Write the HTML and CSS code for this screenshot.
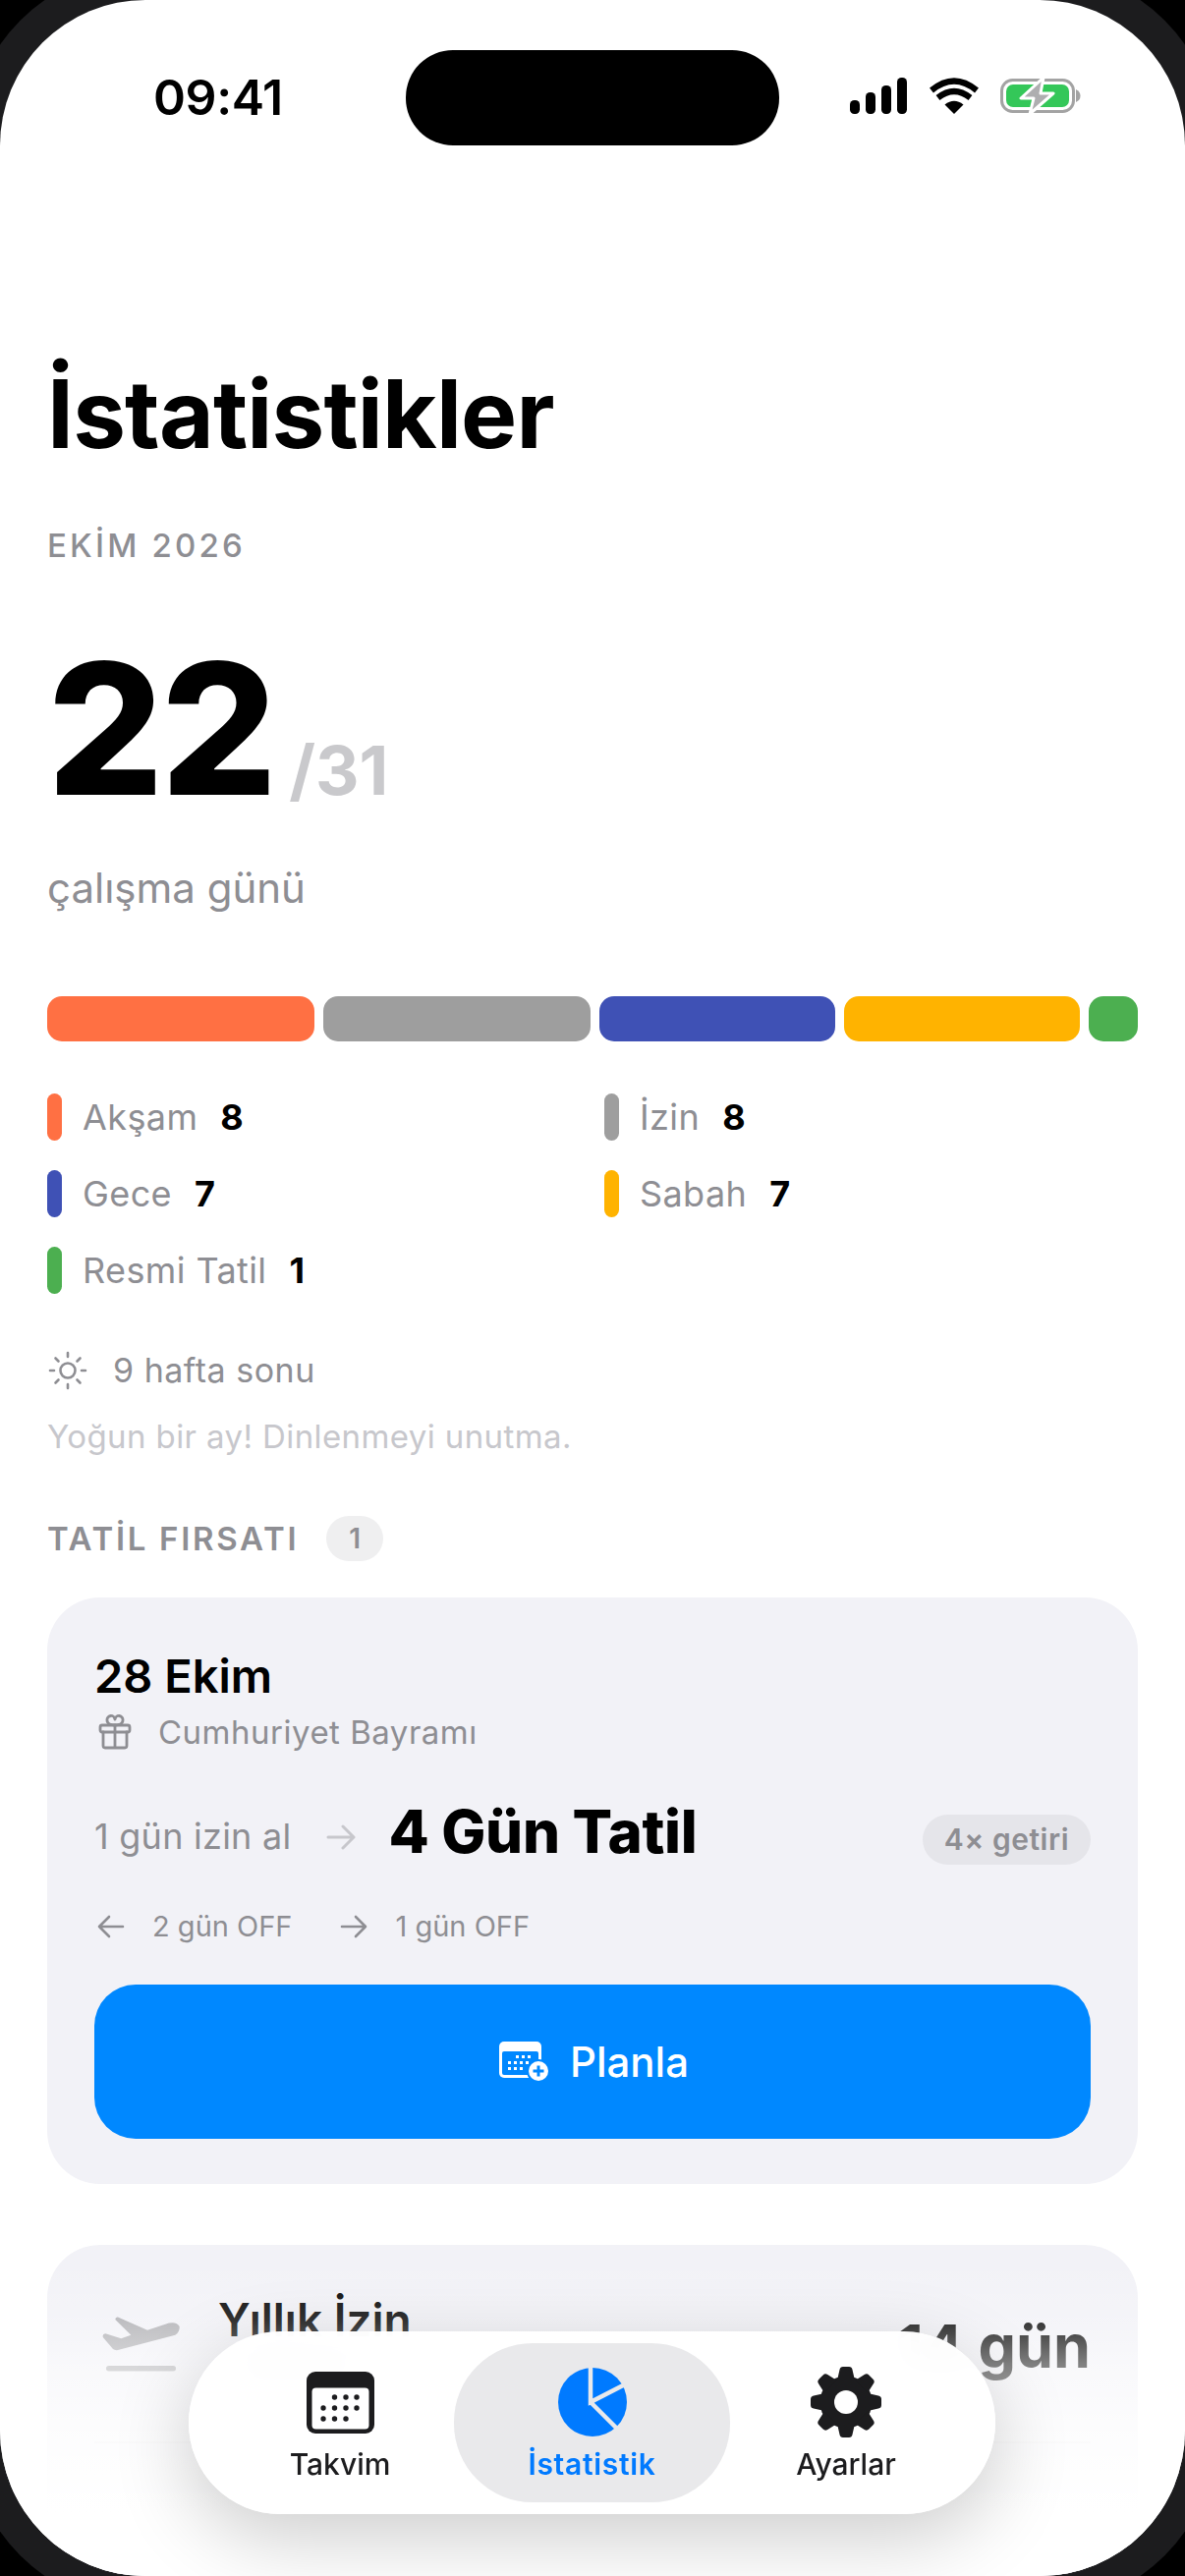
FILE: index.html
```html
<!DOCTYPE html>
<html lang="tr">
<head>
    <meta charset="UTF-8">
    <meta name="viewport" content="width=device-width, initial-scale=1.0">
    <title>İstatistikler</title>
    <link rel="stylesheet" href="styles.css">
</head>
<body>
    <div class="screen">
        <div class="status-bar">
            <div class="time">09:41</div>
            <div class="island"></div>
            <div class="status-icons">
                <svg class="signal" width="58" height="37" viewBox="0 0 58 37">
                    <rect x="0" y="23" width="10" height="14" rx="4.5"/>
                    <rect x="16" y="15" width="10" height="22" rx="4.5"/>
                    <rect x="32" y="8" width="10" height="29" rx="4.5"/>
                    <rect x="48" y="0" width="10" height="37" rx="4.5"/>
                </svg>
                <svg class="wifi" width="50" height="37" viewBox="0 0 50 37">
                    <path d="M25 37 L15.5 27.5 Q25 20 34.5 27.5 Z"/>
                    <path d="M8.5 20.5 Q25 7.5 41.5 20.5" fill="none" stroke="#000" stroke-width="6.2"/>
                    <path d="M2 13 Q25 -6 48 13" fill="none" stroke="#000" stroke-width="6.2"/>
                </svg>
                <svg class="battery" width="82" height="40" viewBox="0 0 82 40">
                    <rect x="1.5" y="3.5" width="73" height="32" rx="11" fill="#fff" stroke="#a3a3a3" stroke-width="3"/>
                    <rect x="6" y="8" width="64" height="23" rx="7" fill="#34c759"/>
                    <path d="M77 13 Q81.5 15 81.5 19.5 Q81.5 24 77 26 Z" fill="#a3a3a3"/>
                    <path d="M44 1 L21 22 H34 L30 38 L54 17 H41 Z" fill="#aeaeb0" stroke="#fff" stroke-width="3" stroke-linejoin="round"/>
                </svg>
            </div>
        </div>

        <div class="content">
            <h1 class="page-title">İstatistikler</h1>
            <div class="month">EKİM 2026</div>

            <div class="total">
                <span class="total-num">22</span>
                <span class="total-of">/31</span>
            </div>
            <div class="total-label">çalışma günü</div>

            <div class="bar">
                <div class="seg seg-8 orange"></div>
                <div class="seg seg-8 gray"></div>
                <div class="seg seg-7 blue"></div>
                <div class="seg seg-7 yellow"></div>
                <div class="seg seg-1 green"></div>
            </div>

            <div class="legend">
                <div class="legend-item"><span class="swatch orange"></span><span class="legend-name">Akşam</span><span class="legend-count">8</span></div>
                <div class="legend-item"><span class="swatch gray"></span><span class="legend-name">İzin</span><span class="legend-count">8</span></div>
                <div class="legend-item"><span class="swatch blue"></span><span class="legend-name">Gece</span><span class="legend-count">7</span></div>
                <div class="legend-item"><span class="swatch yellow"></span><span class="legend-name">Sabah</span><span class="legend-count">7</span></div>
                <div class="legend-item"><span class="swatch green"></span><span class="legend-name">Resmi Tatil</span><span class="legend-count">1</span></div>
            </div>

            <div class="weekend">
                <svg width="40" height="40" viewBox="0 0 40 40" fill="none" stroke="#8e8e93" stroke-width="2.6" stroke-linecap="round">
                    <circle cx="20" cy="20" r="7.5"/>
                    <path d="M20 2v4M20 34v4M2 20h4M34 20h4M7.5 7.5l3 3M29.5 29.5l3 3M7.5 32.5l3-3M29.5 10.5l3-3"/>
                </svg>
                <span>9 hafta sonu</span>
            </div>
            <div class="note">Yoğun bir ay! Dinlenmeyi unutma.</div>

            <div class="section-head">
                <span class="section-title">TATİL FIRSATI</span>
                <span class="section-badge">1</span>
            </div>

            <div class="card deal">
                <div class="deal-date">28 Ekim</div>
                <div class="deal-holiday">
                    <svg width="36" height="36" viewBox="0 0 36 36" fill="none" stroke="#8e8e93" stroke-width="2.8" stroke-linejoin="round" stroke-linecap="round">
                        <rect x="3" y="11" width="30" height="7" rx="2"/>
                        <path d="M6 18v14a2 2 0 0 0 2 2h20a2 2 0 0 0 2-2V18M18 11v23"/>
                        <path d="M18 11c-3 0-8-1-8-5a3.6 3.6 0 0 1 8-1 3.6 3.6 0 0 1 8 1c0 4-5 5-8 5Z"/>
                    </svg>
                    <span>Cumhuriyet Bayramı</span>
                </div>
                <div class="deal-main">
                    <span class="deal-take">1 gün izin al</span>
                    <svg class="deal-arrow" width="30" height="26" viewBox="0 0 30 26" fill="none" stroke="#c7c7cc" stroke-width="3" stroke-linecap="round" stroke-linejoin="round">
                        <path d="M2 13h26M17 2l11 11-11 11"/>
                    </svg>
                    <span class="deal-result">4 Gün Tatil</span>
                    <span class="deal-pill">4× getiri</span>
                </div>
                <div class="deal-off">
                    <svg width="28" height="24" viewBox="0 0 28 24" fill="none" stroke="#8e8e93" stroke-width="2.6" stroke-linecap="round" stroke-linejoin="round">
                        <path d="M26 12H2M12 2 2 12l10 10"/>
                    </svg>
                    <span class="off-left">2 gün OFF</span>
                    <svg width="28" height="24" viewBox="0 0 28 24" fill="none" stroke="#8e8e93" stroke-width="2.6" stroke-linecap="round" stroke-linejoin="round">
                        <path d="M2 12h24M16 2l10 10-10 10"/>
                    </svg>
                    <span>1 gün OFF</span>
                </div>
                <button class="plan-btn">
                    <svg width="52" height="42" viewBox="0 0 52 42">
                        <rect x="0" y="0" width="43" height="37" rx="5" fill="#fff"/>
                        <rect x="3" y="10" width="37" height="24" rx="2" fill="#0088ff"/>
                        <g fill="#fff">
                            <rect x="17" y="14" width="3" height="3"/><rect x="23" y="14" width="3" height="3"/><rect x="29" y="14" width="3" height="3"/>
                            <rect x="9" y="20" width="3" height="3"/><rect x="15" y="20" width="3" height="3"/><rect x="21" y="20" width="3" height="3"/><rect x="27" y="20" width="3" height="3"/>
                            <rect x="9" y="26" width="3" height="3"/><rect x="15" y="26" width="3" height="3"/><rect x="21" y="26" width="3" height="3"/>
                        </g>
                        <circle cx="40" cy="30" r="12" fill="#0088ff"/>
                        <circle cx="40" cy="30" r="10" fill="#fff"/>
                        <path d="M40 24.5v11M34.500 30h11" stroke="#0088ff" stroke-width="3"/>
                    </svg>
                    <span>Planla</span>
                </button>
            </div>

            <div class="card leave">
                <div class="leave-row">
                    <svg class="plane" width="80" height="56" viewBox="0 0 80 56">
                        <path d="M13.300 3 Q13.500 0 16 .5 L46 13.700 L68 6.500 Q76 5 78.700 10 Q79 16 74.300 18.700 L16 34 Q13 34.500 11 33 L1 21.300 Q-.5 18 3.300 17.300 L19.300 22.300 L29.300 18.700 Z" fill="#aeaeb2"/>
                        <rect x="4" y="50" width="71" height="5.500" rx="2.700" fill="#aeaeb2"/>
                    </svg>
                    <div class="leave-text">
                        <div class="leave-name">Yıllık İzin</div>
                        <div class="leave-sub"></div>
                    </div>
                    <div class="leave-days">14 gün</div>
                </div>
                <div class="leave-line"></div>
            </div>
        </div>

        <div class="fade"></div>

        <nav class="tabbar">
            <div class="tab">
                <div class="tab-icon">
                    <svg width="69" height="63" viewBox="0 0 69 63">
                        <rect width="69" height="63" rx="9" fill="#1c1c1e"/>
                        <rect x="5.500" y="16.500" width="58" height="42" rx="4" fill="#fff"/>
                        <g fill="#1c1c1e">
                            <circle cx="28.500" cy="26" r="2.700"/><circle cx="40" cy="26" r="2.700"/><circle cx="51" cy="26" r="2.700"/>
                            <circle cx="17" cy="37" r="2.700"/><circle cx="28.500" cy="37" r="2.700"/><circle cx="40" cy="37" r="2.700"/><circle cx="51" cy="37" r="2.700"/>
                            <circle cx="17" cy="48" r="2.700"/><circle cx="28.500" cy="48" r="2.700"/><circle cx="40" cy="48" r="2.700"/>
                        </g>
                    </svg>
                </div>
                <span>Takvim</span>
            </div>
            <div class="tab active">
                <div class="tab-icon">
                    <svg width="70" height="70" viewBox="0 0 70 70">
                        <circle cx="35" cy="35" r="35" fill="#007aff"/>
                        <path d="M33 0V35L68 17M33 35 61 63" fill="none" stroke="#e9e9eb" stroke-width="4.500"/>
                    </svg>
                </div>
                <span>İstatistik</span>
            </div>
            <div class="tab">
                <div class="tab-icon">
                    <svg width="72" height="72" viewBox="0 0 72 72">
                        <defs>
                            <path id="tooth" d="M27 14 L29.500 3 Q30 0 33 0 H39 Q42 0 42.500 3 L45 14 Z"/>
                        </defs>
                        <g fill="#1c1c1e">
                            <circle cx="36" cy="36" r="26.500"/>
                            <use href="#tooth"/>
                            <use href="#tooth" transform="rotate(45 36 36)"/>
                            <use href="#tooth" transform="rotate(90 36 36)"/>
                            <use href="#tooth" transform="rotate(135 36 36)"/>
                            <use href="#tooth" transform="rotate(180 36 36)"/>
                            <use href="#tooth" transform="rotate(225 36 36)"/>
                            <use href="#tooth" transform="rotate(270 36 36)"/>
                            <use href="#tooth" transform="rotate(315 36 36)"/>
                        </g>
                        <circle cx="36" cy="36" r="12" fill="#fff"/>
                    </svg>
                </div>
                <span>Ayarlar</span>
            </div>
        </nav>
    </div>
</body>
</html>
```

FILE: styles.css
```css
* {
    box-sizing: border-box;
}

html, body {
    margin: 0;
    background: #000;
}

body {
    width: 1206px;
    height: 2622px;
    overflow: hidden;
    font-family: 'Inter', 'Liberation Sans', sans-serif;
    color: #000;
}

/* the spread shadow is the dark bezel ring seen in the corners */
.screen {
    position: relative;
    width: 1206px;
    height: 2622px;
    overflow: hidden;
    background: #fff;
    border-radius: 148px;
    box-shadow: 0 0 0 32px #1c1c1e;
}

.status-bar {
    display: flex;
    height: 148px;
    padding: 51px 106px 0 156px;
}

.time {
    width: 257px;
    margin-top: 21px;
    font-size: 50px;
    line-height: 54px;
    font-weight: 600;
    letter-spacing: -0.4px;
    white-space: nowrap;
}

.island {
    width: 380px;
    height: 97px;
    background: #000;
    border-radius: 48px;
}

.status-icons {
    display: flex;
    gap: 23px;
    align-items: flex-start;
    margin: 28px 0 0 auto;
}

.status-icons .battery {
    margin-left: -1px;
    margin-top: -1px;
}

.content {
    padding: 0 48px;
}

.page-title {
    margin: 215px 0 0;
    font-size: 96px;
    line-height: 116px;
    font-weight: 700;
    letter-spacing: -0.8px;
}

.month {
    margin-top: 56px;
    font-size: 33px;
    line-height: 40px;
    font-weight: 500;
    letter-spacing: 3.2px;
    color: #8e8e93;
}

.total {
    display: flex;
    align-items: baseline;
    gap: 15px;
    margin-top: 62px;
}

.total-num {
    font-size: 186px;
    line-height: 210px;
    font-weight: 800;
    letter-spacing: -3px;
}

.total-of {
    font-size: 69px;
    font-weight: 700;
    color: #c9c9cc;
}

.total-label {
    margin-top: 32px;
    font-size: 42px;
    line-height: 50px;
    color: #8e8e93;
}

.bar {
    display: flex;
    gap: 9px;
    height: 46px;
    margin-top: 85px;
}

.seg {
    border-radius: 15px;
}

.seg-8 {
    flex: 8;
}

.seg-7 {
    flex: 7.06;
}

.seg-1 {
    flex: 1;
    min-width: 50px;
}

.orange {
    background: #ff7043;
}

.gray {
    background: #9e9e9e;
}

.blue {
    background: #3f51b5;
}

.yellow {
    background: #ffb300;
}

.green {
    background: #4caf50;
}

.legend {
    display: grid;
    grid-template-columns: 555px 555px;
    column-gap: 12px;
    row-gap: 30px;
    margin-top: 53px;
}

.legend-item {
    display: flex;
    align-items: center;
    height: 48px;
}

.swatch {
    width: 15px;
    height: 48px;
    margin-right: 21px;
    border-radius: 8px;
}

.legend-name {
    margin-right: 23px;
    font-size: 36px;
    color: #8e8e93;
    letter-spacing: 0.4px;
}

.legend-count {
    font-size: 36px;
    font-weight: 700;
}

.weekend {
    display: flex;
    align-items: center;
    gap: 26px;
    margin-top: 57px;
    padding-left: 1px;
    font-size: 34px;
    color: #8e8e93;
    letter-spacing: 0.5px;
}

.note {
    margin-top: 26px;
    font-size: 33px;
    line-height: 42px;
    color: #c7c7cc;
    letter-spacing: 0.4px;
}

.section-head {
    display: flex;
    align-items: center;
    gap: 28px;
    margin-top: 60px;
}

.section-title {
    font-size: 33px;
    font-weight: 600;
    letter-spacing: 2.7px;
    color: #8e8e93;
}

.section-badge {
    width: 58px;
    height: 46px;
    border-radius: 23px;
    background: #efeff0;
    color: #8e8e93;
    font-size: 28px;
    font-weight: 600;
    line-height: 46px;
    text-align: center;
}

.card {
    background: #f2f2f7;
    border-radius: 54px;
}

.deal {
    margin-top: 37px;
    height: 597px;
    padding: 51px 48px 0;
}

.deal-date {
    font-size: 47px;
    line-height: 58px;
    font-weight: 600;
}

.deal-holiday {
    display: flex;
    align-items: center;
    gap: 26px;
    margin-top: 8px;
    padding-left: 3px;
    font-size: 33px;
    line-height: 40px;
    color: #8e8e93;
    letter-spacing: 0.5px;
}

.deal-main {
    display: flex;
    align-items: center;
    margin-top: 44px;
    height: 74px;
}

.deal-take {
    margin-top: 10px;
    font-size: 36px;
    color: #8e8e93;
    letter-spacing: 0.25px;
}

.deal-arrow {
    margin: 12px 33px 0 36px;
}

.deal-result {
    font-size: 60px;
    font-weight: 800;
    letter-spacing: -0.3px;
}

.deal-pill {
    margin: 16px 0 0 auto;
    padding: 0 22px;
    height: 51px;
    border-radius: 26px;
    background: #e5e5ea;
    color: #8e8e93;
    font-size: 30px;
    font-weight: 600;
    line-height: 51px;
    letter-spacing: 0.5px;
}

.deal-off {
    display: flex;
    align-items: center;
    gap: 28px;
    margin-top: 42px;
    padding-left: 3px;
    font-size: 29px;
    line-height: 36px;
    color: #8e8e93;
}

.off-left {
    margin-right: 21px;
}

.plan-btn {
    display: flex;
    align-items: center;
    justify-content: center;
    gap: 20px;
    width: 100%;
    height: 157px;
    margin-top: 41px;
    padding-left: 9px;
    border: none;
    border-radius: 42px;
    background: #0088ff;
    color: #fff;
    font-family: inherit;
    font-size: 42px;
    font-weight: 500;
}

.leave {
    height: 400px;
    margin-top: 62px;
    padding: 47px 48px 0;
}

.leave-row {
    display: flex;
    align-items: flex-start;
    height: 153px;
}

.plane {
    margin: 26px 0 0 8px;
}

.leave-text {
    margin-left: 38px;
}

.leave-name {
    font-size: 46px;
    line-height: 58px;
    font-weight: 600;
}

.leave-sub {
    width: 110px;
    height: 26px;
    margin: 6px 0 0 24px;
    border-radius: 8px;
    background: #8e8e93;
}

.leave-days {
    margin: 19px 0 0 auto;
    font-size: 61px;
    font-weight: 700;
}

.leave-line {
    height: 2px;
    background: #e0e0e4;
}

/* white fade behind the tab bar */
.fade {
    position: absolute;
    left: 0;
    right: 0;
    bottom: 0;
    height: 322px;
    background: linear-gradient(to bottom, rgba(255, 255, 255, 0), rgba(255, 255, 255, 0.2) 19%, rgba(255, 255, 255, 0.5) 33%, rgba(255, 255, 255, 0.85) 57%, #fff 80%);
}

.tabbar {
    position: absolute;
    left: 192px;
    top: 2373px;
    display: flex;
    width: 821px;
    height: 186px;
    padding: 12px 0 12px 38px;
    border-radius: 93px;
    background: rgba(255, 255, 255, 0.97);
    backdrop-filter: blur(14px);
    box-shadow: 0 24px 80px rgba(0, 0, 0, 0.2);
}

.tab {
    display: flex;
    flex-direction: column;
    align-items: center;
    gap: 9px;
    width: 232px;
    padding-top: 24px;
    border-radius: 80px;
    color: #1c1c1e;
    font-size: 30px;
    line-height: 36px;
    font-weight: 500;
}

.tab:last-child {
    width: 236px;
}

.tab.active {
    width: 281px;
    background: #e9e9eb;
    color: #007aff;
    font-weight: 600;
    letter-spacing: 0.7px;
}

.tab-icon {
    display: flex;
    align-items: center;
    justify-content: center;
    height: 72px;
}
```
